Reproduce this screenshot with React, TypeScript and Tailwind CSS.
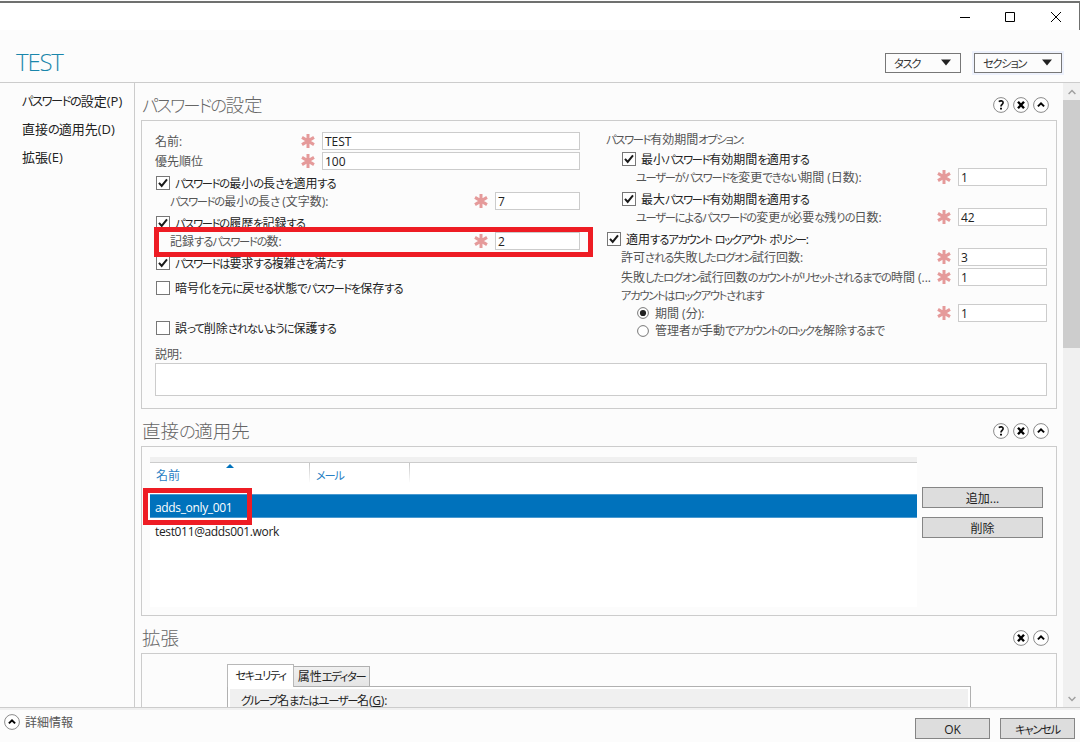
import { Fragment, ReactNode } from "react";

// Windows UI fonts draw kana narrower than kanji, so each run gets its own spacing
function Ja({ children }: { children: string }) {
    return (
        <>
            {children.split(/([\u3041-\u309f]+|[\u30a0-\u30ff]+)/).map((run, i) => {
                if (/^[\u30a0-\u30ff]/.test(run)) return <span key={i} className="text-[0.94em] tracking-[-0.115em]">{run}</span>;
                if (/^[\u3041-\u309f]/.test(run)) return <span key={i} className="text-[0.94em] tracking-[-0.09em]">{run}</span>;
                return <Fragment key={i}>{run}</Fragment>;
            })}
        </>
    );
}

function Star() {
    return (
        <svg width="14" height="14" viewBox="0 0 14 14" className="shrink-0" stroke="#e59a9a" strokeWidth="3">
            <path d="M7 0v14M1 3.4l12 7.2M13 3.4L1 10.6" />
        </svg>
    );
}

function Box({ value, className }: { value: string; className: string }) {
    return (
        <div className={`ml-[7px] flex h-[18px] shrink-0 items-center border border-[#cccccc] bg-white pl-[2px] pt-px text-[#222] ${className}`}>
            {value}
        </div>
    );
}

function Field({ label, value, indent = "", box }: { label: ReactNode; value: string; indent?: string; box: string }) {
    return (
        <div className="flex h-[18px] items-center">
            <div className={`flex-1 pt-[2px] ${indent}`}>{label}</div>
            <Star />
            <Box value={value} className={box} />
        </div>
    );
}

function Check({ label, checked = false, className = "" }: { label: string; checked?: boolean; className?: string }) {
    return (
        <div className={`flex h-[18px] items-center gap-[5px] text-[#222] ${className}`}>
            <svg width="14" height="14" viewBox="0 0 14 14" className="shrink-0">
                <rect x="0.5" y="0.5" width="13" height="13" fill="#fff" stroke="#777" />
                {checked && <path d="M3 6.8l2.7 3.2L11 3.4" fill="none" stroke="#1a1a1a" strokeWidth="2" />}
            </svg>
            <span className="pt-[2px]"><Ja>{label}</Ja></span>
        </div>
    );
}

function Radio({ checked = false }: { checked?: boolean }) {
    return (
        <svg width="12" height="12" viewBox="0 0 12 12" className="mr-[6px] shrink-0">
            <circle cx="6" cy="6" r="5.4" fill="#fff" stroke="#777" />
            {checked && <circle cx="6" cy="6" r="3.1" fill="#222" />}
        </svg>
    );
}

function RoundIcon({ kind }: { kind: "help" | "close" | "up" }) {
    return (
        <svg width="16" height="16" viewBox="0 0 16 16" fill="none">
            <circle cx="8" cy="8" r="7.4" fill="#fff" stroke="#8a8a8a" />
            {kind === "help" && (
                <>
                    <path d="M5.8 4.6C7.2 3.4 10.3 3.5 10.1 5.7 10 7.3 8 7.4 8 9.5" stroke="#111" strokeWidth="1.7" />
                    <path d="M7 10.7h2v1.8H7z" fill="#111" />
                </>
            )}
            {kind === "close" && <path d="M5 4.8l6 6.4M11 4.8l-6 6.4" stroke="#000" strokeWidth="2.4" />}
            {kind === "up" && <path d="M4.9 9.4L8 6.4l3.1 3" stroke="#000" strokeWidth="2" />}
        </svg>
    );
}

function SectionHead({ title, help = false }: { title: string; help?: boolean }) {
    return (
        <div className="flex h-[37px] shrink-0 items-center justify-between pl-px pr-[8px]">
            <h2 className="mt-[8px] text-[18.5px] font-light text-[#666]"><Ja>{title}</Ja></h2>
            <div className="mt-[6px] flex gap-1">
                {help && <RoundIcon kind="help" />}
                <RoundIcon kind="close" />
                <RoundIcon kind="up" />
            </div>
        </div>
    );
}

function PushButton({ label, className }: { label: string; className: string }) {
    return (
        <button className={`flex h-[21px] items-center justify-center border border-[#858585] bg-[#dddddd] text-[#222] ${className}`}>
            <span className="pt-[2px]"><Ja>{label}</Ja></span>
        </button>
    );
}

function DropButton({ label, className }: { label: string; className: string }) {
    return (
        <button className={`flex h-[20px] items-center justify-between border border-[#777] bg-[#fcfcfc] pl-[8px] pr-[9px] text-[#333] ${className}`}>
            <span className="pt-[2px]"><Ja>{label}</Ja></span>
            <svg width="10" height="7" viewBox="0 0 10 7"><path d="M0 0.5h10L5 6.5z" fill="#222" /></svg>
        </button>
    );
}

export default function App() {
    return (
        <div className="relative flex h-[742px] w-[1080px] flex-col overflow-hidden bg-[#fcfcfc] font-['Open_Sans','Noto_Sans_CJK_JP',sans-serif] text-[12px] leading-none text-[#555] [font-feature-settings:'palt'] whitespace-nowrap">
            <div className="mt-px flex h-[29px] shrink-0 items-center justify-end border-t-2 border-r border-[#6f706f] bg-white pr-[17px]">
                <svg width="102" height="12" viewBox="0 0 102 12" fill="none" stroke="#000">
                    <path d="M0 6.5h10M45.5 1.5h9v9h-9zM91 1l10 10M101 1L91 11" />
                </svg>
            </div>

            <header className="flex h-[53px] shrink-0 items-center justify-between border-b border-[#cccccc] pl-[16px] pr-[18px]">
                <h1 className="mt-[11px] text-[24px] font-light tracking-[-1.2px] text-[#1a86ab]">TEST</h1>
                <div className="mt-[13px] flex gap-[13px]">
                    <DropButton label="タスク" className="w-[76px]" />
                    <DropButton label="セクション" className="w-[88px] shadow-[0_0_0_2px_#edf1fc]" />
                </div>
            </header>

            <div className="flex h-[624px] shrink-0">
                <nav className="flex w-[135px] shrink-0 flex-col gap-[15px] border-r border-[#cccccc] pl-[22px] pt-[12px] text-[13px] text-[#222]">
                    <a><Ja>パスワードの設定(P)</Ja></a>
                    <a><Ja>直接の適用先(D)</Ja></a>
                    <a><Ja>拡張(E)</Ja></a>
                </nav>

                <main className="flex flex-1 flex-col overflow-hidden pl-[6px] pr-[6px]">
                    <SectionHead title="パスワードの設定" help />
                    <section className="h-[289px] shrink-0 border border-[#cccccc] pl-[13px] pr-[9px] pt-[9px]">
                        <div className="flex justify-between">
                            <div className="w-[425px] pt-[2px]">
                                <div className="mb-[2px]"><Field label="名前:" value="TEST" box="w-[258px]" /></div>
                                <Field label="優先順位" value="100" box="w-[258px]" />
                                <Check checked className="mt-[4px] pl-px" label="パスワードの最小の長さを適用する" />
                                <Field indent="pl-[15px]" label={<Ja>パスワードの最小の長さ (文字数):</Ja>} value="7" box="w-[85px]" />
                                <Check checked className="mt-[4px] pl-px" label="パスワードの履歴を記録する" />
                                <Field indent="pl-[15px]" label={<Ja>記録するパスワードの数:</Ja>} value="2" box="w-[85px]" />
                                <Check checked className="mt-[4px] pl-px" label="パスワードは要求する複雑さを満たす" />
                                <Check className="mt-[7px] pl-px" label="暗号化を元に戻せる状態でパスワードを保存する" />
                                <Check className="mt-[22px] pl-px" label="誤って削除されないように保護する" />
                            </div>
                            <div className="w-[441px]">
                                <div className="flex h-[18px] items-center pt-[2px]"><span><Ja>パスワード有効期間オプション:</Ja></span></div>
                                <Check checked className="mt-[2px] pl-[16px]" label="最小パスワード有効期間を適用する" />
                                <Field indent="pl-[30px]" label={<Ja>ユーザーがパスワードを変更できない期間 (日数):</Ja>} value="1" box="w-[89px]" />
                                <Check checked className="mt-[4px] pl-[16px]" label="最大パスワード有効期間を適用する" />
                                <Field indent="pl-[30px]" label={<Ja>ユーザーによるパスワードの変更が必要な残りの日数:</Ja>} value="42" box="w-[89px]" />
                                <Check checked className="mt-[4px] pl-px" label="適用するアカウント ロックアウト ポリシー:" />
                                <Field indent="pl-[15px]" label={<Ja>許可される失敗したログオン試行回数:</Ja>} value="3" box="w-[89px]" />
                                <div className="mt-[2px]">
                                    <Field indent="pl-[15px]" label={<Ja>失敗したログオン試行回数のカウントがリセットされるまでの時間 (...</Ja>} value="1" box="w-[89px]" />
                                </div>
                                <div className="flex h-[18px] items-center pl-[15px] pt-[2px]"><span><Ja>アカウントはロックアウトされます</Ja></span></div>
                                <Field
                                    indent="-mt-[2px] pl-[31px]"
                                    label={<span className="flex items-center"><Radio checked /><span className="pt-[2px]"><Ja>期間 (分):</Ja></span></span>}
                                    value="1"
                                    box="w-[89px]"
                                />
                                <div className="flex h-[17px] items-center pl-[31px]"><Radio /><span className="pt-px"><Ja>管理者が手動でアカウントのロックを解除するまで</Ja></span></div>
                            </div>
                        </div>
                        <div className="mt-[10px]">説明:</div>
                        <div className="mt-[2px] h-[33px] border border-[#cccccc] bg-white" />
                    </section>

                    <SectionHead title="直接の適用先" help />
                    <section className="flex h-[170px] shrink-0 border border-[#cccccc] pl-[8px] pt-[10px]">
                        <div className="h-[150px] w-[767px] bg-white">
                            <div className="h-[6px] border-b border-[#cccccc] bg-[#f0f0f0]" />
                            <div className="relative flex h-[31px] text-[#2a7fc4]">
                                <div className="w-[159px] pl-[6px] pt-[7px]">名前</div>
                                <div className="h-[20px] w-px bg-linear-to-b from-[#c4c4c4] to-white" />
                                <div className="w-[99px] pl-[6px] pt-[7px]"><Ja>メール</Ja></div>
                                <div className="h-[20px] w-px bg-linear-to-b from-[#c4c4c4] to-white" />
                                <svg width="8" height="4" viewBox="0 0 8 4" className="absolute left-[76px] top-px"><path d="M0 4L4 0l4 4z" fill="#0072bc" /></svg>
                            </div>
                            <div className="flex h-[24px] items-center border-y border-[#4b9ad0] bg-[#0072bc] pl-[5px] pt-[3px] tracking-[-0.35px] text-white">adds_only_001</div>
                            <div className="flex h-[24px] items-center pl-[5px] pt-[3px] tracking-[-0.35px] text-[#222]">test011@adds001.work</div>
                        </div>
                        <div className="ml-[5px] flex flex-col gap-[9px] pt-[30px]">
                            <PushButton label="追加..." className="w-[121px]" />
                            <PushButton label="削除" className="w-[121px]" />
                        </div>
                    </section>

                    <SectionHead title="拡張" />
                    <section className="h-[80px] shrink-0 border border-[#cccccc] pl-[85px] pt-[10px] text-[#222]">
                        <div className="flex items-end">
                            <div className="z-10 -mb-px flex h-[23px] w-[67px] items-center justify-center border border-b-0 border-[#b8b8b8] bg-white"><span><Ja>セキュリティ</Ja></span></div>
                            <div className="flex h-[20px] w-[76px] items-center justify-center border border-b-0 border-l-0 border-[#b0b0b0] bg-linear-to-b from-[#f0f0f0] to-[#e5e5e5] pt-px"><span><Ja>属性エディター</Ja></span></div>
                        </div>
                        <div className="h-[50px] w-[744px] border border-[#b0b0b0] bg-white px-[2px] pt-[2px]">
                            <div className="h-full bg-[#f0f0f0] pl-[11px] pt-[6px] tracking-[-0.2px]"><Ja>グループ名またはユーザー名</Ja>(<u>G</u>):</div>
                        </div>
                    </section>
                </main>

                <div className="flex w-[17px] shrink-0 flex-col bg-[#f0f0f0]">
                    <div className="flex h-[17px] items-center justify-center">
                        <svg width="8" height="6" viewBox="0 0 8 6" fill="none" stroke="#a0a0a0" strokeWidth="1.4"><path d="M0.6 5L4 1.4 7.4 5" /></svg>
                    </div>
                    <div className="h-[248px] bg-[#cdcdcd]" />
                    <div className="mt-auto flex h-[17px] items-center justify-center">
                        <svg width="8" height="6" viewBox="0 0 8 6" fill="none" stroke="#a0a0a0" strokeWidth="1.4"><path d="M0.6 1L4 4.6 7.4 1" /></svg>
                    </div>
                </div>
            </div>

            <footer className="flex h-[35px] shrink-0 border-t border-[#cccccc] shadow-[inset_0_2px_0_#f0f0f0]">
                <div className="flex flex-1 items-start gap-[5px] pl-[4px] pt-[6px]">
                    <RoundIcon kind="up" />
                    <span className="pt-[3px]">詳細情報</span>
                </div>
                <div className="flex gap-[10px] pr-[5px] pt-[10px]">
                    <PushButton label="OK" className="w-[75px]" />
                    <PushButton label="キャンセル" className="w-[75px]" />
                </div>
            </footer>

            {/* highlight frames */}
            <div className="absolute left-[154px] top-[227px] h-[30px] w-[439px] border-[5px] border-[#ee1c24]" />
            <div className="absolute left-[143px] top-[488px] h-[37px] w-[109px] border-[5px] border-[#ee1c24]" />
        </div>
    );
}
